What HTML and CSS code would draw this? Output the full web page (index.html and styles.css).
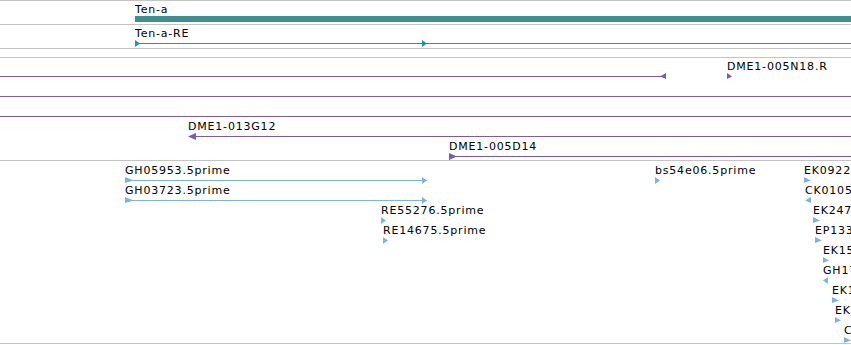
FILE: index.html
```html
<!DOCTYPE html>
<html>

<head>
    <title>Tracks</title>
    <link rel="stylesheet" href="styles.css">
</head>

<body>
    <div class="browser">
        <div class="track track-gene">
            <svg class="lane" viewBox="0 1 851 23" width="851" height="23">
                <text class="label" x="135" y="13">Ten-a</text>
                <rect class="gene-bar" x="135" y="16" width="716" height="6"></rect>
            </svg>
        </div>

        <div class="track track-transcript">
            <svg class="lane" viewBox="0 25 851 23" width="851" height="23">
                <text class="label" x="135" y="37">Ten-a-RE</text>
                <line class="tx-line" x1="135" y1="43.5" x2="851" y2="43.5"></line>
                <polygon class="tx-head" points="135,40 140,43.5 135,47"></polygon>
                <polygon class="tx-head" points="422,40 427,43.5 422,47"></polygon>
            </svg>
        </div>

        <div class="track track-empty"></div>

        <div class="track track-bac">
            <svg class="lane" viewBox="0 58 851 102" width="851" height="102">
                <line class="bac-line" x1="0" y1="76.5" x2="664" y2="76.5"></line>
                <polygon class="bac-head" points="660,76.5 666,73 666,79"></polygon>

                <text class="label" x="727" y="70">DME1-005N18.R</text>
                <polygon class="bac-head" points="727,73 732,76.5 727,79"></polygon>

                <line class="bac-line" x1="0" y1="96.5" x2="851" y2="96.5"></line>
                <line class="bac-line" x1="0" y1="116.5" x2="851" y2="116.5"></line>

                <text class="label" x="188" y="130">DME1-013G12</text>
                <line class="bac-line" x1="190" y1="136.5" x2="851" y2="136.5"></line>
                <polygon class="bac-head" points="188,136.5 196,133 196,140"></polygon>

                <text class="label" x="449" y="150">DME1-005D14</text>
                <line class="bac-line" x1="449" y1="156.5" x2="851" y2="156.5"></line>
                <polygon class="bac-head" points="449,153 457,156.5 449,160"></polygon>
            </svg>
        </div>

        <div class="track track-est">
            <svg class="lane" viewBox="0 161 851 182" width="851" height="182">
                <text class="label" x="125" y="174">GH05953.5prime</text>
                <line class="est-line" x1="125" y1="180.5" x2="427" y2="180.5"></line>
                <polygon class="est-head" points="125,177 134,180.5 125,183"></polygon>
                <polygon class="est-head" points="422,177 427,180.5 422,184"></polygon>

                <text class="label" x="125" y="194">GH03723.5prime</text>
                <line class="est-line" x1="125" y1="200.5" x2="427" y2="200.5"></line>
                <polygon class="est-head" points="125,197 134,200.5 125,203"></polygon>
                <polygon class="est-head" points="422,197 427,200.5 422,204"></polygon>

                <text class="label" x="381" y="214">RE55276.5prime</text>
                <polygon class="est-head" points="381,217 386,220.5 381,224"></polygon>

                <text class="label" x="383" y="234">RE14675.5prime</text>
                <polygon class="est-head" points="383,237 388,240.5 383,244"></polygon>

                <text class="label" x="655" y="174">bs54e06.5prime</text>
                <polygon class="est-head" points="655,177 660,180.5 655,184"></polygon>

                <text class="label" x="804" y="174">EK092258.5prime</text>
                <polygon class="est-head" points="804,177 811,180.5 804,183"></polygon>

                <text class="label" x="805" y="194">CK010571.5prime</text>
                <polygon class="est-head" points="805,200.5 811,197 811,203"></polygon>

                <text class="label" x="813" y="214">EK247516.5prime</text>
                <polygon class="est-head" points="813,217 820,220.5 813,223"></polygon>

                <text class="label" x="815" y="234">EP133461.5prime</text>
                <polygon class="est-head" points="815,237 822,240.5 815,243"></polygon>

                <text class="label" x="823" y="254">EK155238.5prime</text>
                <polygon class="est-head" points="823,257 829,260.5 823,263"></polygon>

                <text class="label" x="823" y="274">GH17814.5prime</text>
                <polygon class="est-head" points="823,280.5 828,277 828,284"></polygon>

                <text class="label" x="832" y="294">EK126004.5prime</text>
                <polygon class="est-head" points="832,297 839,300.5 832,303"></polygon>

                <text class="label" x="835" y="314">EK083412.5prime</text>
                <polygon class="est-head" points="835,317 841,320.5 835,323"></polygon>

                <text class="label" x="844" y="334">CK021533.5prime</text>
                <polygon class="est-head" points="844,337 851,340.5 844,343"></polygon>
            </svg>
        </div>
    </div>
</body>

</html>
```

FILE: styles.css
```css
body {
    margin: 0;
    background: #fff;
    font-family: "DejaVu Sans", sans-serif;
    overflow: hidden;
}

.browser {
    width: 851px;
    border-top: 1px solid #c4c4c4;
    overflow: hidden;
}

.track {
    border-bottom: 1px solid #c4c4c4;
    overflow: hidden;
}

.track-gene,
.track-transcript {
    height: 23px;
}

.track-empty {
    height: 8px;
}

.track-bac {
    height: 102px;
}

.track-est {
    height: 182px;
}

.lane {
    display: block;
}

.label {
    font-family: "DejaVu Sans", sans-serif;
    font-size: 11px;
    letter-spacing: 0.8px;
    fill: #000;
}

.gene-bar {
    fill: #418e91;
}

.tx-line {
    stroke: #1797b4;
    stroke-width: 1;
}

.tx-head {
    fill: #1797b4;
}

.bac-line {
    stroke: #7a5ab5;
    stroke-width: 1;
}

.bac-head {
    fill: #7a5ab5;
}

.est-line {
    stroke: #7cb5de;
    stroke-width: 1;
}

.est-head {
    fill: #7cb5de;
}
```
